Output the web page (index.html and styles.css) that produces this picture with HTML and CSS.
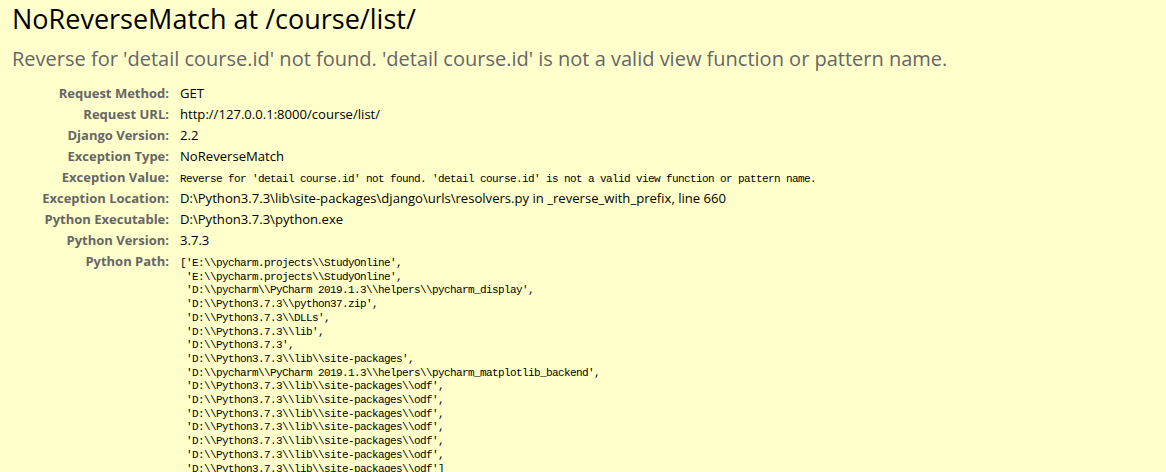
FILE: index.html
```html
<!DOCTYPE html>
<html>
<head>
<meta charset="utf-8">
<title>NoReverseMatch at /course/list/</title>
<link rel="stylesheet" href="styles.css">
</head>
<body>
<div class="summary">
  <h1 class="title">NoReverseMatch at /course/list/</h1>
  <h2 class="subtitle">Reverse for 'detail course.id' not found. 'detail course.id' is not a valid view function or pattern name.</h2>
  <table class="meta">
    <tbody>
      <tr><th>Request Method:</th><td>GET</td></tr>
      <tr><th>Request URL:</th><td>http://127.0.0.1:8000/course/list/</td></tr>
      <tr><th>Django Version:</th><td>2.2</td></tr>
      <tr><th>Exception Type:</th><td>NoReverseMatch</td></tr>
      <tr><th>Exception Value:</th><td><pre class="exc">Reverse for 'detail course.id' not found. 'detail course.id' is not a valid view function or pattern name.</pre></td></tr>
      <tr><th>Exception Location:</th><td>D:\Python3.7.3\lib\site-packages\django\urls\resolvers.py in _reverse_with_prefix, line 660</td></tr>
      <tr><th>Python Executable:</th><td>D:\Python3.7.3\python.exe</td></tr>
      <tr><th>Python Version:</th><td>3.7.3</td></tr>
      <tr><th>Python Path:</th><td><pre class="path">['E:\\pycharm.projects\\StudyOnline',
 'E:\\pycharm.projects\\StudyOnline',
 'D:\\pycharm\\PyCharm 2019.1.3\\helpers\\pycharm_display',
 'D:\\Python3.7.3\\python37.zip',
 'D:\\Python3.7.3\\DLLs',
 'D:\\Python3.7.3\\lib',
 'D:\\Python3.7.3',
 'D:\\Python3.7.3\\lib\\site-packages',
 'D:\\pycharm\\PyCharm 2019.1.3\\helpers\\pycharm_matplotlib_backend',
 'D:\\Python3.7.3\\lib\\site-packages\\odf',
 'D:\\Python3.7.3\\lib\\site-packages\\odf',
 'D:\\Python3.7.3\\lib\\site-packages\\odf',
 'D:\\Python3.7.3\\lib\\site-packages\\odf',
 'D:\\Python3.7.3\\lib\\site-packages\\odf',
 'D:\\Python3.7.3\\lib\\site-packages\\odf',
 'D:\\Python3.7.3\\lib\\site-packages\\odf']</pre></td></tr>
    </tbody>
  </table>
</div>
</body>
</html>
```
FILE: styles.css
```css
html, body {
  margin: 0;
  padding: 0;
  background: #ffffcc;
}
body {
  font-family: "Open Sans", "Noto Sans", sans-serif;
  font-size: 13px;
  color: #000;
}
.summary {
  background: #ffffcc;
  padding: 3px 0 20px 12px;
  min-height: 100vh;
  box-sizing: border-box;
}
.title {
  margin: 0;
  font-size: 27px;
  line-height: 32px;
  font-weight: normal;
  color: #000;
}
.subtitle {
  margin: 11px 0 0 0;
  font-size: 20px;
  line-height: 26px;
  font-weight: normal;
  color: #666;
}
.meta {
  margin-top: 11px;
  border-collapse: collapse;
  border-spacing: 0;
}
.meta th,
.meta td {
  vertical-align: top;
  line-height: 17px;
  padding: 2px 3px;
}
.meta th {
  width: 157px;
  padding: 2px 8px 2px 0;
  text-align: right;
  font-weight: bold;
  color: #666;
  white-space: nowrap;
}
.meta td {
  color: #000;
  font-size: 13.1px;
}
.meta pre {
  margin: 0;
  font-family: "Liberation Mono", "DejaVu Sans Mono", monospace;
  font-size: 11px;
  letter-spacing: -0.6px;
  white-space: pre;
}
.exc {
  line-height: 17px;
  padding-top: 2px;
  height: 15px;
}
.path {
  line-height: 13.7px;
  padding-top: 4px;
}
```
